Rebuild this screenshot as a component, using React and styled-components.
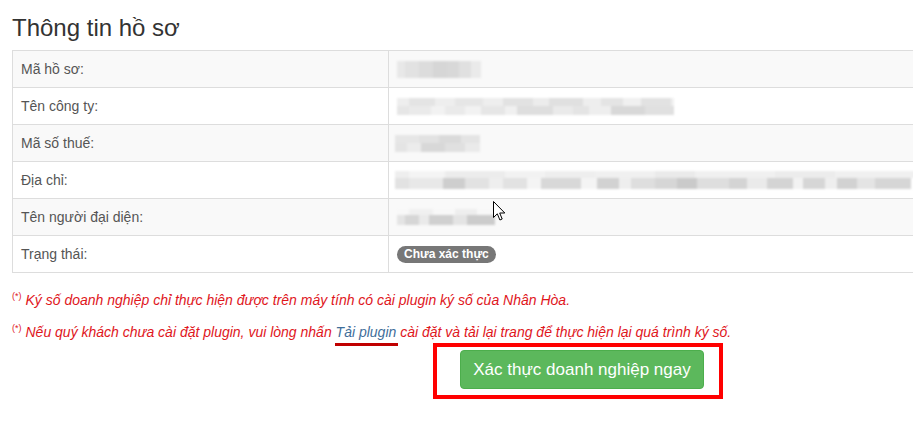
import React from 'react';
import styled, { createGlobalStyle } from 'styled-components';

const GlobalStyle = createGlobalStyle`
    html, body {
        margin: 0;
        padding: 0;
        background: #fff;
        overflow: hidden;
    }
    body {
        font-family: "Liberation Sans", Arial, sans-serif;
        color: #333;
    }
`;

const Page = styled.div`
    position: relative;
    width: 913px;
    height: 424px;
    overflow: hidden;
    padding: 0 0 0 12px;
    box-sizing: border-box;
`;

const Title = styled.h3`
    margin: 0;
    padding-top: 14px;
    height: 50px;
    box-sizing: border-box;
    font-size: 24px;
    font-weight: 400;
    line-height: 28px;
    color: #333;
`;

const InfoTable = styled.table`
    width: 940px;
    table-layout: fixed;
    border-collapse: collapse;
    border: 1px solid #ddd;
    font-size: 14px;
    color: #555;

    tr:nth-child(odd) td {
        background: #f9f9f9;
    }
`;

const Cell = styled.td`
    height: 37px;
    padding: 0 8px;
    border-top: 1px solid #ddd;
    border-left: 1px solid #ddd;
    vertical-align: middle;
    box-sizing: border-box;
`;

const Blur = styled.div`
    display: flex;
    flex-direction: column;
    filter: blur(0.8px);
    margin-left: ${(props) => props.$offset || 0}px;
`;

const BlurRow = styled.div`
    display: flex;
    height: ${(props) => props.$h}px;
`;

const Seg = styled.span`
    display: block;
    height: 100%;
`;

const Badge = styled.span`
    display: inline-block;
    padding: 2px 7px;
    font-size: 12px;
    font-weight: 700;
    line-height: 13px;
    color: #fff;
    background: #777;
    border-radius: 10px;
`;

const Notes = styled.div`
    margin-top: 13px;
    display: flex;
    flex-direction: column;
    gap: 8px;
`;

const Note = styled.p`
    margin: 0;
    font-size: 14px;
    line-height: 20px;
    font-style: italic;
    color: #e0161c;

    sup {
        font-size: 9px;
        font-style: normal;
        vertical-align: 6px;
        margin-right: 4px;
    }
`;

const PluginLink = styled.a`
    position: relative;
    color: #3f6e9a;
    text-decoration: none;

    &::after {
        content: '';
        position: absolute;
        left: -1px;
        right: -2px;
        bottom: -6px;
        height: 3px;
        background: #c00000;
    }
`;

const Highlight = styled.div`
    margin: 0 0 0 421px;
    width: 290px;
    height: 56px;
    box-sizing: border-box;
    border: 4px solid #ff0000;
    padding: 3px 0 0 23px;
    position: relative;
    top: 1px;
`;

const SuccessButton = styled.button`
    width: 244px;
    height: 39px;
    padding: 0 10px;
    border: 1px solid #4cae4c;
    border-radius: 4px;
    background: #5cb85c;
    color: #fff;
    font-family: "Liberation Sans", Arial, sans-serif;
    font-size: 17px;
    cursor: pointer;
`;

const Cursor = styled.svg`
    position: absolute;
    left: 493px;
    top: 201px;
`;

const g = (v) => `rgb(${v},${v},${v})`;

const blurData = {
    code: {
        offset: 0,
        rows: [{ h: 17, segs: [[8, 232], [14, 226], [14, 220], [14, 214], [12, 216], [12, 224], [10, 234]] }],
    },
    company: {
        offset: 0,
        rows: [
            { h: 8, segs: [[12, 238], [26, 228], [20, 238], [28, 230], [20, 238], [30, 226], [16, 236], [34, 224], [18, 238], [22, 228], [18, 240], [30, 226], [3, 240]] },
            { h: 9, segs: [[12, 230], [22, 234], [14, 242], [20, 234], [16, 242], [24, 230], [12, 240], [36, 222], [20, 234], [16, 228], [22, 238], [34, 216], [29, 224]] },
        ],
    },
    tax: {
        offset: -2,
        rows: [
            { h: 8, segs: [[24, 230], [20, 226], [22, 218], [19, 228]] },
            { h: 9, segs: [[12, 228], [14, 236], [24, 216], [20, 224], [15, 234]] },
        ],
    },
    address: {
        offset: -2,
        rows: [
            { h: 7, segs: [[14, 238], [36, 244], [60, 236], [40, 242], [50, 238], [60, 240], [40, 234], [80, 240], [60, 236], [90, 240]] },
            { h: 11, segs: [[14, 226], [34, 232], [22, 206], [24, 226], [14, 238], [24, 226], [14, 244], [40, 216], [16, 244], [22, 210], [12, 238], [24, 222], [22, 214], [20, 202], [32, 222], [18, 212], [20, 234], [26, 212], [10, 242], [22, 214], [12, 238], [20, 210], [18, 228], [36, 214]] },
        ],
    },
    rep: {
        offset: 0,
        rows: [
            { h: 6, segs: [[12, 248], [24, 240], [22, 248], [22, 238], [18, 248]] },
            { h: 10, segs: [[8, 228], [14, 214], [10, 234], [24, 208], [14, 228], [28, 204]] },
        ],
    },
};

const Blurred = ({ data }) => (
    <Blur $offset={data.offset}>
        {data.rows.map((row, i) => (
            <BlurRow key={i} $h={row.h}>
                {row.segs.map(([w, c], j) => (
                    <Seg key={j} style={{ width: w, background: g(c) }} />
                ))}
            </BlurRow>
        ))}
    </Blur>
);

const rows = [
    { label: 'Mã hồ sơ:', blur: 'code' },
    { label: 'Tên công ty:', blur: 'company' },
    { label: 'Mã số thuế:', blur: 'tax' },
    { label: 'Địa chỉ:', blur: 'address' },
    { label: 'Tên người đại diện:', blur: 'rep' },
    { label: 'Trạng thái:', status: 'Chưa xác thực' },
];

export default function App() {
    return (
        <>
            <GlobalStyle />
            <Page>
                <Title>Thông tin hồ sơ</Title>
                <InfoTable>
                    <colgroup>
                        <col style={{ width: 376 }} />
                        <col />
                    </colgroup>
                    <tbody>
                        {rows.map((row) => (
                            <tr key={row.label}>
                                <Cell>{row.label}</Cell>
                                <Cell>
                                    {row.status ? (
                                        <Badge>{row.status}</Badge>
                                    ) : (
                                        <Blurred data={blurData[row.blur]} />
                                    )}
                                </Cell>
                            </tr>
                        ))}
                    </tbody>
                </InfoTable>
                <Notes>
                    <Note>
                        <sup>(*)</sup>Ký số doanh nghiệp chỉ thực hiện được trên máy tính có cài plugin ký số của Nhân Hòa.
                    </Note>
                    <Note>
                        <sup>(*)</sup>Nếu quý khách chưa cài đặt plugin, vui lòng nhấn{' '}
                        <PluginLink href="#">Tải plugin</PluginLink> cài đặt và tải lại trang để thực hiện lại quá trình ký số.
                    </Note>
                </Notes>
                <Highlight>
                    <SuccessButton>Xác thực doanh nghiệp ngay</SuccessButton>
                </Highlight>
                <Cursor width="13" height="21" viewBox="0 0 13 21">
                    <path d="M0.5 0.5 L0.5 16.5 L4.3 12.8 L6.9 19 L9.2 18 L6.7 12 L11.8 12 Z" fill="#fff" stroke="#000" strokeWidth="1" strokeLinejoin="round" />
                </Cursor>
            </Page>
        </>
    );
}
